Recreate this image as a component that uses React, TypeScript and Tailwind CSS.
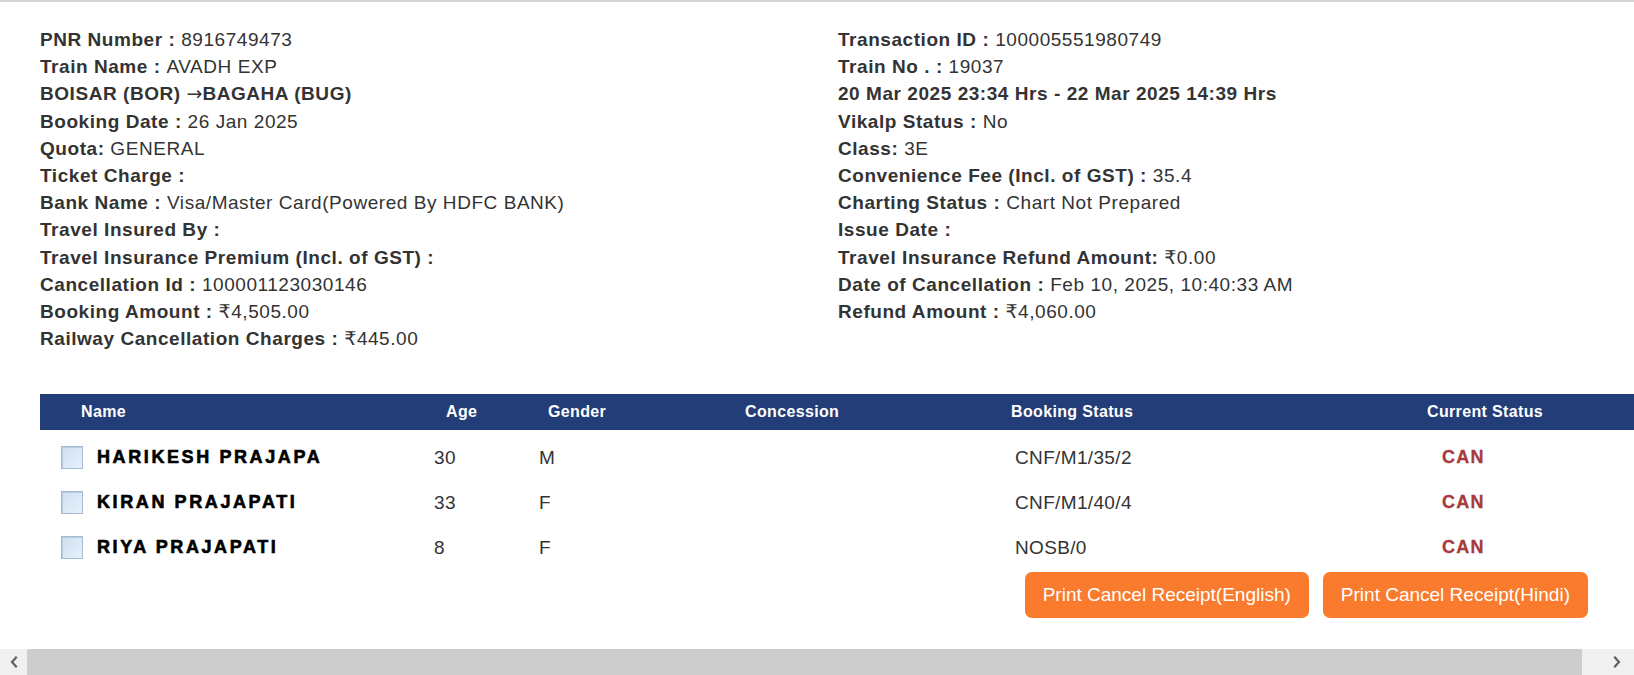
import React from 'react'

const leftInfo: [string, string][] = [
  ['PNR Number : ', '8916749473'],
  ['Train Name : ', 'AVADH EXP'],
  ['BOISAR (BOR) ', ''],
  ['Booking Date : ', '26 Jan 2025'],
  ['Quota: ', 'GENERAL'],
  ['Ticket Charge : ', ''],
  ['Bank Name : ', 'Visa/Master Card(Powered By HDFC BANK)'],
  ['Travel Insured By : ', ''],
  ['Travel Insurance Premium (Incl. of GST) : ', ''],
  ['Cancellation Id : ', '100001123030146'],
  ['Booking Amount : ', '\u20b94,505.00'],
  ['Railway Cancellation Charges : ', '\u20b9445.00'],
]

const rightInfo: [string, string][] = [
  ['Transaction ID : ', '100005551980749'],
  ['Train No . : ', '19037'],
  ['20 Mar 2025 23:34 Hrs - 22 Mar 2025 14:39 Hrs', ''],
  ['Vikalp Status : ', 'No'],
  ['Class: ', '3E'],
  ['Convenience Fee (Incl. of GST) : ', '35.4'],
  ['Charting Status : ', 'Chart Not Prepared'],
  ['Issue Date : ', ''],
  ['Travel Insurance Refund Amount: ', '\u20b90.00'],
  ['Date of Cancellation : ', 'Feb 10, 2025, 10:40:33 AM'],
  ['Refund Amount : ', '\u20b94,060.00'],
]

const passengers = [
  { name: 'HARIKESH PRAJAPA', age: '30', gender: 'M', booking: 'CNF/M1/35/2', current: 'CAN' },
  { name: 'KIRAN PRAJAPATI', age: '33', gender: 'F', booking: 'CNF/M1/40/4', current: 'CAN' },
  { name: 'RIYA PRAJAPATI', age: '8', gender: 'F', booking: 'NOSB/0', current: 'CAN' },
]

const cols = 'grid grid-cols-[380px_100px_200px_270px_410px_1fr]'

function InfoLine({ label, value }: { label: string; value: string }) {
  // the journey line has an arrow between the two stations
  if (label.startsWith('BOISAR')) {
    return (
      <div className="whitespace-pre font-bold">
        {label}
        <span className="font-['DejaVu_Sans',sans-serif] font-normal tracking-normal">{'\u2192'}</span>
        BAGAHA (BUG)
      </div>
    )
  }
  return (
    <div className="whitespace-pre">
      <span className="font-bold">{label}</span>
      {value && <span>{value}</span>}
    </div>
  )
}

function Checkbox() {
  return (
    <span className="block w-[22px] h-[23px] border border-[#a7bbd0] bg-gradient-to-br from-[#cfe0f1] to-[#e6f1fb] shadow-[inset_1px_1px_0_#b9cde2]" />
  )
}

function Chevron({ dir }: { dir: 'left' | 'right' }) {
  return (
    <svg width="8" height="12" viewBox="0 0 8 12" fill="none" stroke="#606060" strokeWidth="2.2" strokeLinecap="square">
      {dir === 'left' ? <path d="M6 1.5 2 6l4 4.5" /> : <path d="M2 1.5 6 6l-4 4.5" />}
    </svg>
  )
}

export default function App() {
  return (
    <div className="w-[1634px] h-[675px] overflow-hidden flex flex-col bg-white text-[#333] font-['Liberation_Sans',Arial,'DejaVu_Sans',sans-serif]">
      <div className="flex-1 flex flex-col border-t-2 border-[#d4d4d4]">

        {/* Ticket details */}
        <div className="pl-[40px] pt-[24px] grid grid-cols-[798px_1fr] text-[19px] leading-[27.2px] tracking-[0.55px]">
          <div>
            {leftInfo.map(([l, v]) => (
              <InfoLine key={l} label={l} value={v} />
            ))}
          </div>
          <div>
            {rightInfo.map(([l, v]) => (
              <InfoLine key={l} label={l} value={v} />
            ))}
          </div>
        </div>

        {/* Passenger table */}
        <div className="ml-[40px] mt-[42px]">
          <div className={`${cols} h-[36px] items-center bg-[#223d78] text-white font-bold text-[16px] tracking-[0.35px]`}>
            <div className="pl-[41px]">Name</div>
            <div className="pl-[26px]">Age</div>
            <div className="pl-[28px]">Gender</div>
            <div className="pl-[25px]">Concession</div>
            <div className="pl-[21px]">Booking Status</div>
            <div className="pl-[27px]">Current Status</div>
          </div>

          <div className="pt-[5px]">
            {passengers.map((p) => (
              <div key={p.name} className={`${cols} h-[45px] items-center text-[19px] tracking-[0.35px]`}>
                <div className="pl-[21px] flex items-center gap-[14px]">
                  <Checkbox />
                  <span className="text-black font-bold text-[18px] tracking-[2.6px] [-webkit-text-stroke:0.6px_black]">
                    {p.name}
                  </span>
                </div>
                <div className="pl-[14px]">{p.age}</div>
                <div className="pl-[19px]">{p.gender}</div>
                <div />
                <div className="pl-[25px]">{p.booking}</div>
                <div className="pl-[42px] text-[#a83a3c] font-bold text-[18px] tracking-[1.2px] [-webkit-text-stroke:0.3px_#a83a3c]">
                  {p.current}
                </div>
              </div>
            ))}
          </div>
        </div>

        {/* Actions */}
        <div className="mt-[2px] pr-[46px] flex justify-end gap-[14px]">
          <button className="h-[46px] px-[18px] rounded-[7px] bg-[#fa7b2d] text-white text-[19px]">
            Print Cancel Receipt(English)
          </button>
          <button className="h-[46px] px-[18px] rounded-[7px] bg-[#fa7b2d] text-white text-[19px]">
            Print Cancel Receipt(Hindi)
          </button>
        </div>
      </div>

      {/* Horizontal scrollbar */}
      <div className="h-[26px] flex bg-[#f0f0f0]">
        <div className="w-[27px] flex items-center justify-center">
          <Chevron dir="left" />
        </div>
        <div className="w-[1555px] bg-[#cdcdcd]" />
        <div className="flex-1 flex items-center justify-end pr-[13px]">
          <Chevron dir="right" />
        </div>
      </div>
    </div>
  )
}
